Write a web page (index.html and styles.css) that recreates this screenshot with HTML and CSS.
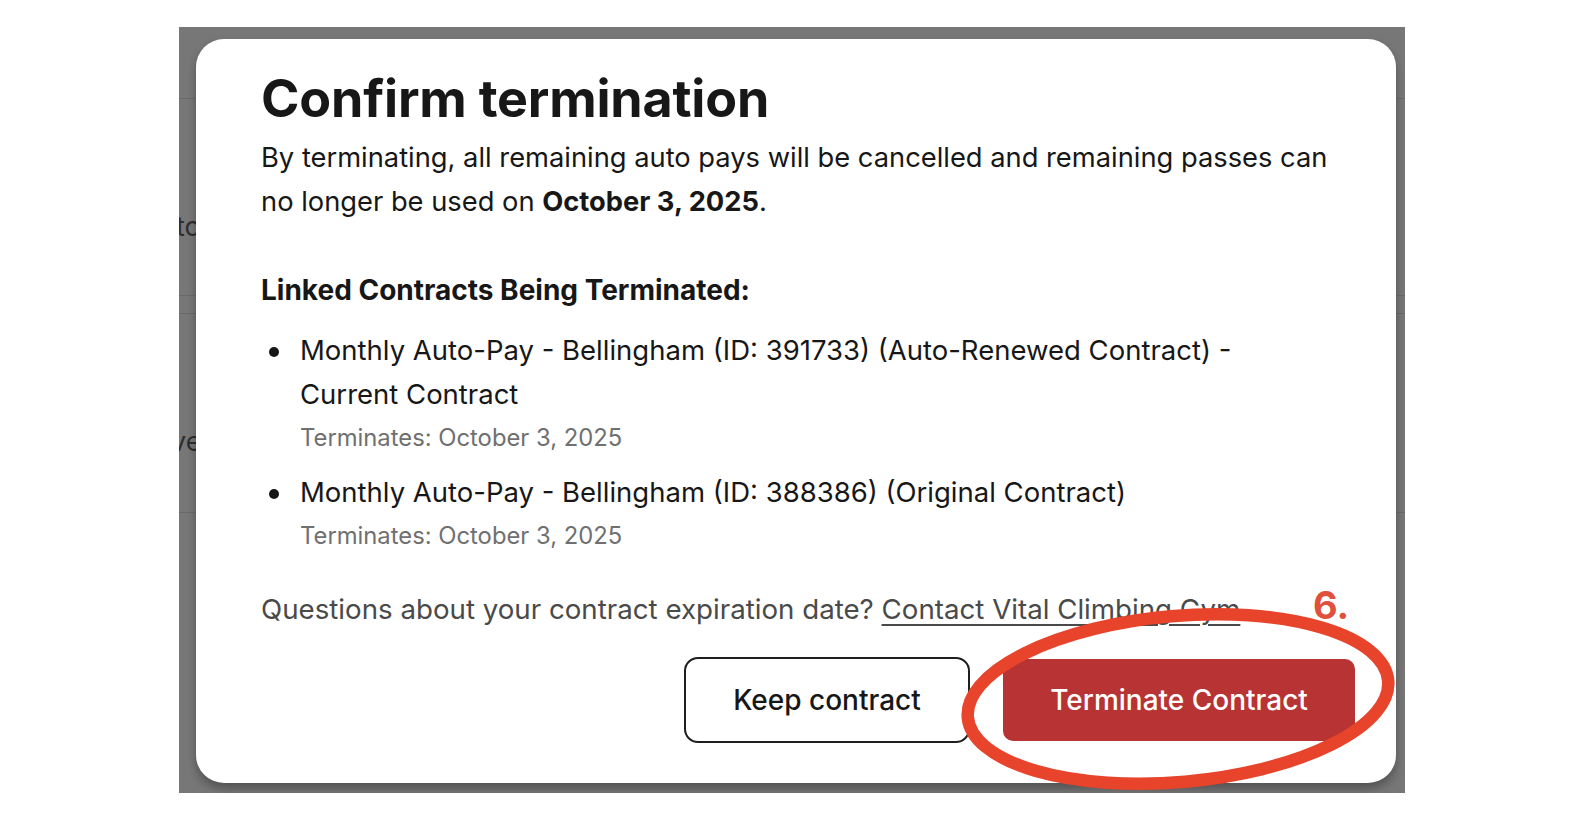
FILE: index.html
```html
<!DOCTYPE html>
<html lang="en">
<head>
<meta charset="utf-8">
<title>Confirm termination</title>
<link rel="stylesheet" href="styles.css">
</head>
<body>
<div class="backdrop">
  <div class="page">
    <div class="page-row r1"></div>
    <div class="page-row r2"><span class="frag frag-a">tc</span></div>
    <div class="page-row r3"></div>
    <div class="page-row r4"><span class="frag frag-b">ve</span></div>
  </div>
  <div class="modal">
    <h1 class="title">Confirm termination</h1>
    <p class="lead">By terminating, all remaining auto pays will be cancelled and remaining passes can no longer be used on <strong>October 3, 2025</strong>.</p>
    <h2 class="subhead">Linked Contracts Being Terminated:</h2>
    <ul class="contracts">
      <li>
        <div class="name">Monthly Auto-Pay - Bellingham (ID: 391733) (Auto-Renewed Contract) - Current Contract</div>
        <div class="ends">Terminates: October 3, 2025</div>
      </li>
      <li>
        <div class="name">Monthly Auto-Pay - Bellingham (ID: 388386) (Original Contract)</div>
        <div class="ends">Terminates: October 3, 2025</div>
      </li>
    </ul>
    <p class="question">Questions about your contract expiration date? <a class="link" href="#">Contact Vital Climbing Gym</a></p>
    <div class="actions">
      <button class="btn btn-keep">Keep contract</button>
      <button class="btn btn-terminate">Terminate Contract</button>
    </div>
  </div>
  <svg class="annotation" width="460" height="220" viewBox="0 0 460 220">
    <ellipse cx="230" cy="110" rx="211" ry="83" fill="none" stroke="#e8432b" stroke-width="12.5" transform="rotate(-5 230 110)"/>
  </svg>
  <span class="step">6.</span>
</div>
</body>
</html>
```

FILE: styles.css
```css
html, body {
  margin: 0;
  padding: 0;
  background: #ffffff;
}

body {
  padding: 27px 0 0 179px;
  font-family: Inter, "Noto Sans", "Liberation Sans", sans-serif;
}

.backdrop {
  position: relative;
  width: 1226px;
  height: 766px;
  background: #777777;
  overflow: hidden;
}

.page {
  display: flex;
  flex-direction: column;
}

.page-row {
  border-bottom: 1px solid #6a6a6a;
  color: #2e2e2e;
  font-size: 27px;
  line-height: 30px;
  box-sizing: border-box;
}

.r1 { height: 72px; }
.r2 { height: 197px; padding-top: 113px; }
.r3 { height: 18px; }
.r4 { height: 199px; padding-top: 113px; }

.frag {
  display: inline-block;
}

.frag-a {
  margin-left: -3px;
}

.frag-b {
  margin-left: -8px;
}

.modal {
  position: absolute;
  left: 17px;
  top: 12px;
  width: 1200px;
  height: 744px;
  box-sizing: border-box;
  background: #ffffff;
  border-radius: 28px;
  padding: 29px 41px 0 65px;
  box-shadow: 0 6px 10px rgba(0, 0, 0, 0.3);
  color: #171717;
}

.title {
  margin: 0;
  font-size: 52px;
  line-height: 62px;
  font-weight: 700;
  letter-spacing: -0.2px;
}

.lead {
  margin: 6px 0 0;
  max-width: 1082px;
  font-size: 27.3px;
  line-height: 44px;
  font-weight: 400;
}

.lead strong {
  font-weight: 700;
}

.subhead {
  margin: 44px 0 0;
  font-size: 28px;
  line-height: 44px;
  font-weight: 700;
}

.contracts {
  list-style: none;
  margin: 16px 0 0;
  padding: 0 0 0 39px;
  max-width: 1031px;
  display: flex;
  flex-direction: column;
  gap: 14px;
}

.contracts li {
  position: relative;
}

.contracts li::before {
  content: "";
  position: absolute;
  left: -31px;
  top: 19px;
  width: 10px;
  height: 10px;
  border-radius: 50%;
  background: #171717;
}

.name {
  font-size: 27.5px;
  line-height: 44px;
}

.ends {
  margin-top: 4px;
  font-size: 23.8px;
  line-height: 36px;
  color: #707070;
}

.question {
  margin: 33px 0 0;
  font-size: 27.7px;
  line-height: 44px;
  color: #4a4a4a;
}

.link {
  color: #4a4a4a;
  text-decoration: underline;
  text-underline-offset: 5px;
  text-decoration-thickness: 2px;
}

.actions {
  display: flex;
  justify-content: flex-end;
  align-items: center;
  gap: 33px;
  margin-top: 26px;
}

.btn {
  font-family: inherit;
  font-size: 28px;
  font-weight: 500;
  cursor: pointer;
}

.btn-keep {
  width: 286px;
  height: 86px;
  background: #ffffff;
  color: #171717;
  border: 2px solid #1e1e1e;
  border-radius: 14px;
}

.btn-terminate {
  width: 352px;
  height: 82px;
  background: #b83333;
  color: #ffffff;
  border: none;
  border-radius: 10px;
}

.annotation {
  position: absolute;
  left: 769px;
  top: 562px;
}

.step {
  position: absolute;
  left: 1134px;
  top: 558px;
  font-size: 38px;
  font-weight: 700;
  color: #e0503d;
  line-height: 40px;
}
```
